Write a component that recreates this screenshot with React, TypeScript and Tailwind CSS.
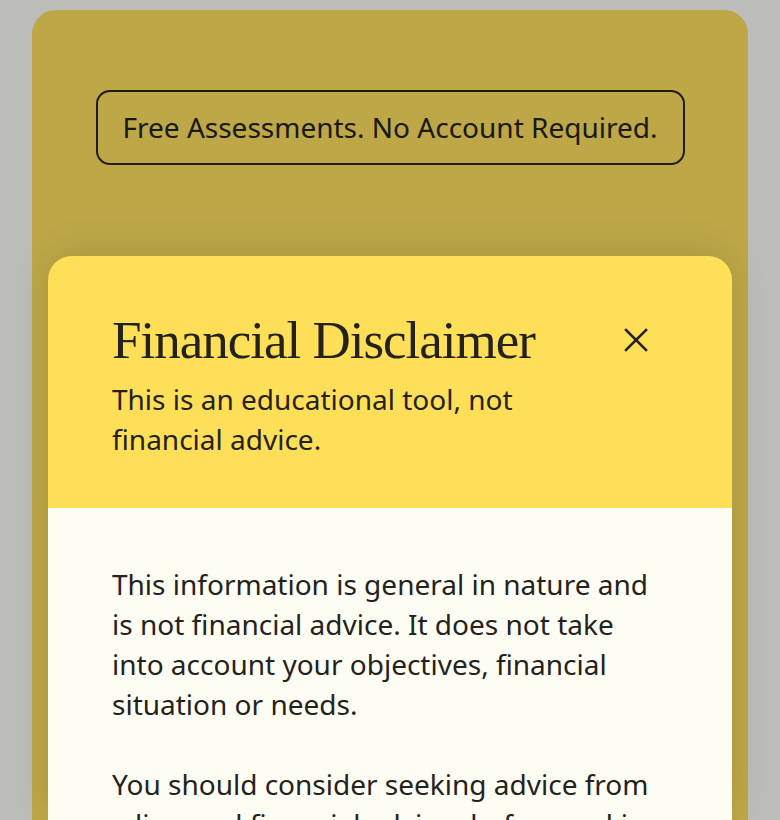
import { useState } from "react";

function CloseIcon() {
  return (
    <svg width="24" height="24" viewBox="0 0 24 24" fill="none" stroke="currentColor" strokeWidth="2.6" strokeLinecap="square">
      <path d="M2 2 22 22" />
      <path d="M22 2 2 22" />
    </svg>
  );
}

export default function App() {
  const [open, setOpen] = useState(true);

  return (
    <div className="min-h-screen bg-[#fefff9] font-['Noto_Sans',sans-serif] text-[#24221c]">
      <div className="mx-8 pt-2.5">
        <section className="bg-[#ffe260] rounded-[24px] pt-20 pb-40 min-h-[1100px] flex flex-col items-center">
          <div className="border-2 border-[#2a261a] rounded-[14px] px-[25px] py-4 text-[28px] leading-[39px]">
            Free Assessments. No Account Required.
          </div>
        </section>
      </div>

      {open && (
        <div className="fixed inset-0 bg-black/[0.26] px-12 pt-[256px] overflow-hidden">
          <div className="h-full flex flex-col rounded-t-[24px] overflow-hidden shadow-[0_-4px_48px_rgba(0,0,0,0.12)]">
            <div className="bg-[#ffdf57] pl-16 pr-[72px] pt-[56px] pb-[49px] flex items-start gap-4">
              <div className="flex-1">
                <h2 className="font-['Liberation_Serif',serif] text-[53px] leading-[56px] tracking-[-1px] text-[#24221c]">
                  Financial Disclaimer
                </h2>
                <p className="mt-[11px] text-[28px] leading-10">
                  This is an educational tool, not financial advice.
                </p>
              </div>
              <button
                onClick={() => setOpen(false)}
                className="w-12 h-14 flex items-center justify-center text-[#24221c]"
                aria-label="Close"
              >
                <CloseIcon />
              </button>
            </div>
            <div className="flex-1 overflow-y-auto bg-[#fefdf4] px-16 pt-14 pb-16 text-[28px] leading-10">
              <p className="mb-10">
                This information is general in nature and is not financial advice. It does not take into account your
                objectives, financial situation or needs.
              </p>
              <p className="mb-10">
                You should consider seeking advice from a licensed financial adviser before making any decisions
                about your money.
              </p>
            </div>
          </div>
        </div>
      )}
    </div>
  );
}
